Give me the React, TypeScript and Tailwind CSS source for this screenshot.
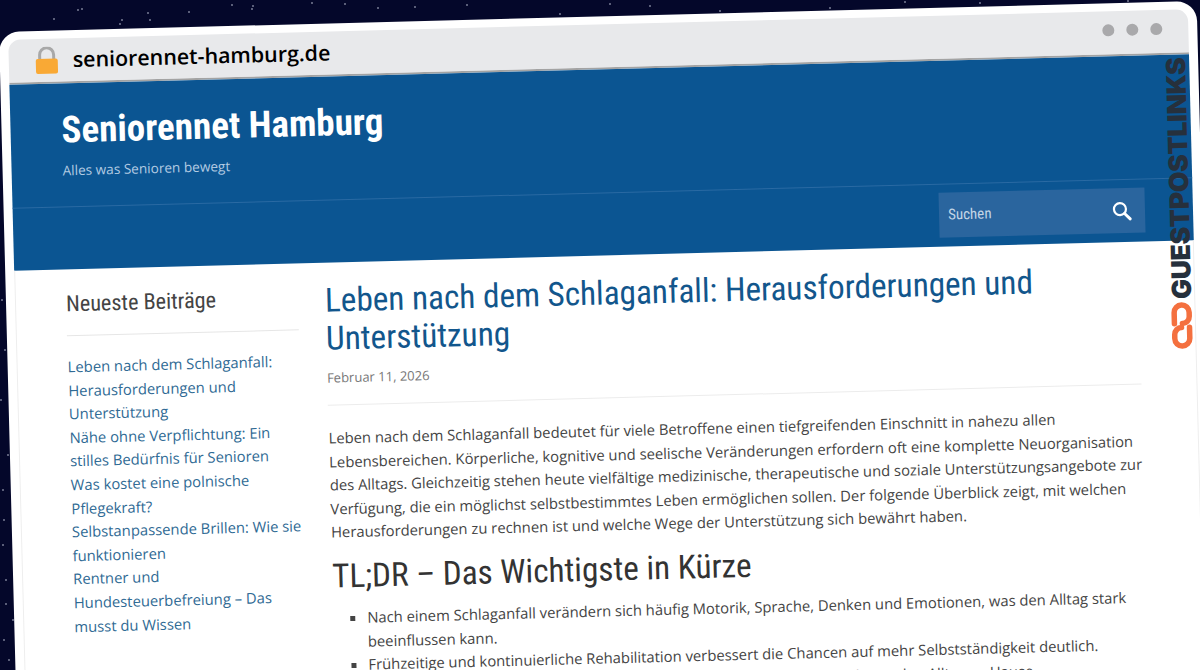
const stars = [
  [78, 10], [148, 13], [122, 20], [189, 12], [253, 6], [345, 4], [415, 7], [252, 9], [232, 5], [378, 8], [467, 5],
  [54, 19], [82, 9], [120, 24], [150, 20], [312, 3], [650, 6], [720, 11], [905, 2], [1128, 1], [6, 580], [4, 520],
  [3, 545], [6, 604], [13, 620], [4, 640], [8, 455], [3, 490], [2, 300], [5, 350], [1, 400], [9, 660], [560, 14],
  [610, 4], [830, 8], [980, 3],
];

const links = [
  "Leben nach dem Schlaganfall: Herausforderungen und Unterstützung",
  "Nähe ohne Verpflichtung: Ein stilles Bedürfnis für Senioren",
  "Was kostet eine polnische Pflegekraft?",
  "Selbstanpassende Brillen: Wie sie funktionieren",
  "Rentner und Hundesteuerbefreiung – Das musst du Wissen",
];

const condensed = "font-['Roboto',sans-serif] font-stretch-condensed";

const App = () => {
  return (
    <div className="relative h-[670px] w-[1200px] overflow-hidden bg-[#04072a]">
      <svg className="absolute inset-0" width="1200" height="670">
        {stars.map(([x, y]) => (
          <circle key={`${x}-${y}`} cx={x} cy={y} r="0.8" fill="#c9cfe0" />
        ))}
      </svg>

      <div className="relative mt-[32px] ml-[-1px] h-[760px] w-[1198px] origin-top-left -rotate-[1.48deg] rounded-t-[20px] bg-white px-[9px] pt-[8px] font-['Open_Sans',sans-serif]">
        <div className="flex h-[45px] items-center rounded-t-[12px] border-b-2 border-[#a3a3a3] bg-[#e8e9eb] pl-[26px] pr-[26px]">
          <svg width="24" height="28" viewBox="0 0 24 28" className="mr-[14px]">
            <path d="M5 13V8a7 7 0 0 1 14 0v5" fill="none" stroke="#a8a8a8" strokeWidth="3" />
            <rect x="1" y="12" width="22" height="15" rx="2" fill="#f9a935" />
          </svg>
          <span className="text-[21.4px] font-semibold text-black">seniorennet-hamburg.de</span>
          <div className="mb-[6px] ml-auto flex gap-[12px]">
            <span className="h-[12px] w-[12px] rounded-full bg-[#a9a9ab]" />
            <span className="h-[12px] w-[12px] rounded-full bg-[#a9a9ab]" />
            <span className="h-[12px] w-[12px] rounded-full bg-[#a9a9ab]" />
          </div>
        </div>

        <div className="bg-[#0b5592]">
          <div className="h-[124px] border-b border-[#2a6aa3] pl-[51px] pt-[23px]">
            <h1 className={`${condensed} text-[37px] leading-[48px] font-bold text-white`}>Seniorennet Hamburg</h1>
            <p className="mt-[6px] text-[13.6px] leading-[20px] text-[#b3cbe2]">Alles was Senioren bewegt</p>
          </div>
          <div className="flex h-[62px] justify-end pr-[48px] pt-[8px]">
            <div className="flex h-[45px] w-[206px] items-center justify-between bg-[#2a659e] pl-[9px] pr-[13px]">
              <span className={`${condensed} text-[15px] text-[#c3d5e6]`}>Suchen</span>
              <svg width="20" height="20" viewBox="0 0 20 20" fill="none" stroke="white" strokeWidth="2.2">
                <circle cx="8" cy="8" r="6" />
                <path d="M12.5 12.5L18 18" strokeWidth="3" strokeLinecap="round" />
              </svg>
            </div>
          </div>
        </div>

        <div className="flex h-[600px] border-x border-[#eeeeee] pl-[50px]">
          <aside className="w-[232px] pt-[19px]">
            <h3 className={`${condensed} border-b border-[#e6e6e6] pb-[17px] text-[22.2px] leading-[30px] text-[#444444]`}>
              Neueste Beiträge
            </h3>
            <ul className="mt-[19px] text-[14.8px] leading-[23.6px] text-[#2f6a94]">
              {links.map((link) => (
                <li key={link}>{link}</li>
              ))}
            </ul>
          </aside>

          <main className="ml-[27px] w-[814px] pt-[19px]">
            <h2 className={`${condensed} text-[33.2px] leading-[38px] text-[#12568c]`}>
              Leben nach dem Schlaganfall: Herausforderungen und Unterstützung
            </h2>
            <p className="mt-[10px] border-b border-[#ececec] pb-[17px] text-[13px] leading-[20px] text-[#777777]">
              Februar 11, 2026
            </p>
            <p className="mt-[21px] text-[14.8px] leading-[23.6px] text-[#444444]">
              Leben nach dem Schlaganfall bedeutet für viele Betroffene einen tiefgreifenden Einschnitt in nahezu allen
              Lebensbereichen. Körperliche, kognitive und seelische Veränderungen erfordern oft eine komplette
              Neuorganisation des Alltags. Gleichzeitig stehen heute vielfältige medizinische, therapeutische und soziale
              Unterstützungsangebote zur Verfügung, die ein möglichst selbstbestimmtes Leben ermöglichen sollen. Der
              folgende Überblick zeigt, mit welchen Herausforderungen zu rechnen ist und welche Wege der Unterstützung
              sich bewährt haben.
            </p>
            <h2 className={`${condensed} mt-[10px] text-[33.2px] leading-[44px] text-[#333333]`}>
              TL;DR – Das Wichtigste in Kürze
            </h2>
            <ul className="mt-[8px] list-[square] pl-[34px] text-[14.8px] leading-[23.6px] text-[#444444]">
              <li>Nach einem Schlaganfall verändern sich häufig Motorik, Sprache, Denken und Emotionen, was den Alltag stark beeinflussen kann.</li>
              <li>Frühzeitige und kontinuierliche Rehabilitation verbessert die Chancen auf mehr Selbstständigkeit deutlich.</li>
              <li>Angehörige und professionelle Hilfe spielen eine große Rolle und erleichtern den Alltag zu Hause.</li>
            </ul>
          </main>
        </div>

        <div className="absolute right-[10px] top-[56px] flex flex-col items-center">
          <span className="rotate-180 font-['Inter',sans-serif] text-[26.5px] leading-[26px] font-black tracking-[-0.3px] text-[#26303c] [writing-mode:vertical-rl]">
            GUESTPOSTLINKS
          </span>
          <svg width="26" height="50" viewBox="0 0 25 50" fill="none" stroke="#f4703f" strokeWidth="5.5" strokeLinecap="round" className="mt-[2px]">
            <path d="M5 23V12a7.5 7.5 0 0 1 15 0v4a7 7 0 0 1-7 7" />
            <path d="M20 27v11a7.5 7.5 0 0 1-15 0v-4a7 7 0 0 1 7-7" />
          </svg>
        </div>
      </div>
    </div>
  );
};

export default App;
